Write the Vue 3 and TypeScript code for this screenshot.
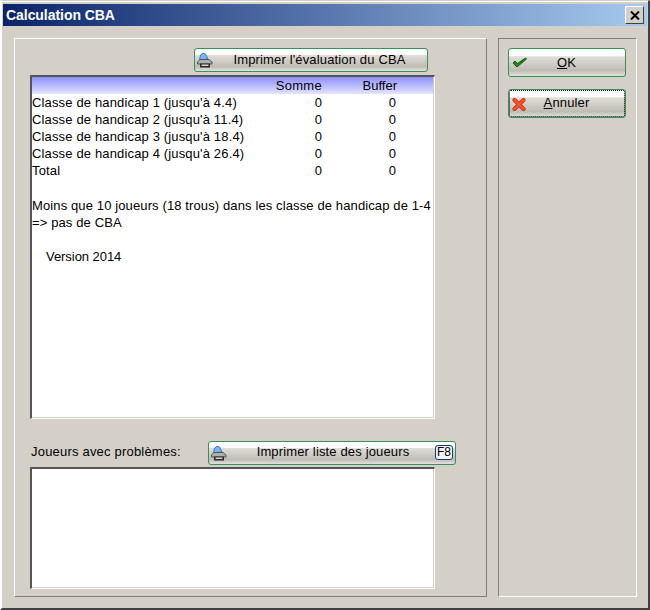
<script setup lang="ts">
const rows = [
  { label: "Classe de handicap 1 (jusqu'à 4.4)", sum: 0, buffer: 0 },
  { label: "Classe de handicap 2 (jusqu'à 11.4)", sum: 0, buffer: 0 },
  { label: "Classe de handicap 3 (jusqu'à 18.4)", sum: 0, buffer: 0 },
  { label: "Classe de handicap 4 (jusqu'à 26.4)", sum: 0, buffer: 0 },
  { label: "Total", sum: 0, buffer: 0 },
]
</script>

<template>
  <div class="window">
    <header class="titlebar">
      <span class="title">Calculation CBA</span>
      <button class="close" aria-label="Fermer">
        <svg width="10" height="9" viewBox="0 0 10 9"><path d="M1 0.5 L9 8.5 M9 0.5 L1 8.5" stroke="#000" stroke-width="2" fill="none" /></svg>
      </button>
    </header>
    <div class="content">
      <section class="group main">
        <div class="print-row first">
          <button class="btn print wide">
            <svg class="printer" width="16" height="16" viewBox="0 0 16 16">
              <path d="M2.5 8 L3.5 3 Q6 0.2 8.5 2 L11 7 Z" fill="#7db4f2" stroke="#2f6cc0" stroke-width="0.9" />
              <path d="M0.5 10 L3 7.5 H12 L15 10 V12 H0.5 Z" fill="#aeb2ae" stroke="#4a4a4a" stroke-width="0.9" />
              <path d="M3 11.5 H13 V15.5 H3 Z" fill="#262626" />
              <path d="M4.5 12.5 H11.5 V14 H4.5 Z" fill="#d8d8d8" />
            </svg>
            <span>Imprimer l'évaluation du CBA</span>
          </button>
        </div>
        <div class="panel report">
          <div class="thead">
            <span></span><span class="num head-cell">Somme</span><span class="num">Buffer</span>
          </div>
          <div v-for="r in rows" :key="r.label" class="row">
            <span class="row-label">{{ r.label }}</span>
            <span class="num zero">{{ r.sum }}</span>
            <span class="num zero">{{ r.buffer }}</span>
          </div>
          <p class="note">Moins que 10 joueurs (18 trous) dans les classe de handicap de 1-4<br />=&gt; pas de CBA</p>
          <p class="version">Version 2014</p>
        </div>
        <div class="print-row second">
          <span class="label">Joueurs avec problèmes:</span>
          <button class="btn print list">
            <svg class="printer" width="16" height="16" viewBox="0 0 16 16">
              <path d="M2.5 8 L3.5 3 Q6 0.2 8.5 2 L11 7 Z" fill="#7db4f2" stroke="#2f6cc0" stroke-width="0.9" />
              <path d="M0.5 10 L3 7.5 H12 L15 10 V12 H0.5 Z" fill="#aeb2ae" stroke="#4a4a4a" stroke-width="0.9" />
              <path d="M3 11.5 H13 V15.5 H3 Z" fill="#262626" />
              <path d="M4.5 12.5 H11.5 V14 H4.5 Z" fill="#d8d8d8" />
            </svg>
            <span>Imprimer liste des joueurs</span>
            <kbd class="key">F8</kbd>
          </button>
        </div>
        <div class="panel players"></div>
      </section>
      <aside class="group side">
        <button class="btn action ok">
          <svg class="glyph" width="16" height="12" viewBox="0 0 16 12"><path d="M1 6 L5 10 L14.5 2 L13.5 1 L5.5 6.5 L3 4 Z" fill="#1f8a1f" stroke="#0c5c0c" stroke-width="1" /></svg>
          <span><u>O</u>K</span>
        </button>
        <button class="btn action focused">
          <svg class="glyph" width="14" height="13" viewBox="0 0 14 13">
            <path d="M2.5 2 L11.5 11 M11.5 2 L2.5 11" stroke="#c42a10" stroke-width="4" stroke-linecap="round" fill="none" />
            <path d="M2.5 2 L11.5 11 M11.5 2 L2.5 11" stroke="#f8502a" stroke-width="2.6" stroke-linecap="round" fill="none" />
          </svg>
          <span><u>A</u>nnuler</span>
        </button>
      </aside>
    </div>
  </div>
</template>

<style>
html, body { margin: 0; padding: 0; background: #d4d0c8; }
</style>

<style scoped>
.window {
  box-sizing: border-box;
  width: 650px;
  height: 610px;
  padding: 3px 1px 1px 1px;
  background: #d4d0c8;
  border-top: 1px solid #d4d0c8;
  border-left: 2px solid #fff;
  border-right: 2px solid #404040;
  border-bottom: 2px solid #404040;
  font-family: "Liberation Sans", Arial, sans-serif;
  font-size: 13px;
  color: #000;
  box-shadow: inset 0 1px 0 #fff;
}
.titlebar {
  height: 22px;
  display: flex;
  align-items: center;
  justify-content: space-between;
  padding: 0 3px;
  background: linear-gradient(90deg, #0a246a, #a6caf0);
}
.title {
  color: #fff;
  font-weight: 700;
  font-size: 14px;
  letter-spacing: -0.05px;
}
.close {
  box-sizing: border-box;
  width: 19px;
  height: 18px;
  padding: 0;
  display: flex;
  align-items: center;
  justify-content: center;
  background: #d4d0c8;
  border: 1px solid;
  border-color: #fff #404040 #404040 #fff;
}
.content {
  display: flex;
  padding: 12px 10px 10px 11px;
  gap: 11px;
  height: 560px;
  box-sizing: border-box;
}
.group { box-sizing: border-box; }
.main {
  width: 473px;
  height: 559px;
  border: 1px solid;
  border-color: #fff #808080 #808080 #fff;
  padding: 9px 0 0 15px;
  display: flex;
  flex-direction: column;
}
.side {
  width: 139px;
  height: 559px;
  border: 1px solid;
  border-color: #808080 #fff #fff #808080;
  padding: 9px;
  display: flex;
  flex-direction: column;
  gap: 12px;
}
.btn {
  box-sizing: border-box;
  position: relative;
  height: 24px;
  padding: 0 0 2px;
  display: flex;
  align-items: center;
  justify-content: center;
  border: 1px solid #35905a;
  border-radius: 3px;
  font: inherit;
  letter-spacing: 0.15px;
  color: #000;
  background: linear-gradient(180deg, #fdfdfc 0 27%, #e0ded9 28%, #bfbcb4 80%, #e4e2dd 100%);
}
.print-row { display: flex; align-items: center; }
.print-row.first { padding-left: 164px; height: 27px; align-items: flex-start; }
.wide { width: 234px; }
.wide span { margin-left: 17px; }
.printer { position: absolute; left: 2px; top: 3px; }
.panel {
  box-sizing: border-box;
  width: 405px;
  background: #fff;
  border-style: solid;
  border-width: 2px 1px 1px 2px;
  border-color: #555 #fff #fff #555;
  box-shadow: inset -1px -1px 0 #d4d0c8;
}
.report { height: 344px; }
.thead, .row {
  display: grid;
  grid-template-columns: 233px 58px 74px;
}
.thead {
  height: 17px;
  line-height: 18px;
  margin-right: 1px;
  background: linear-gradient(180deg, #8f8fff, #e4e4ff);
}
.head-cell { letter-spacing: 0.3px; white-space: nowrap; padding-right: 1px; }
.row { height: 17px; line-height: 17px; }
.row-label { letter-spacing: 0.15px; white-space: nowrap; }
.num { text-align: right; }
.zero { padding-right: 1px; }
.note { margin: 18px 0 0 0; line-height: 17px; letter-spacing: 0.12px; white-space: nowrap; }
.version { margin: 17px 0 0 14px; line-height: 17px; letter-spacing: -0.05px; }
.print-row.second { margin-top: 21px; height: 25px; }
.label { width: 177px; padding-left: 1px; letter-spacing: 0.2px; padding-bottom: 2px; white-space: nowrap; }
.list { width: 248px; }
.list > span:first-of-type { margin-left: 2px; }
.key {
  position: absolute;
  right: 2px;
  top: 3px;
  box-sizing: border-box;
  width: 18px;
  height: 15px;
  font: inherit;
  font-size: 12px;
  line-height: 13px;
  letter-spacing: 0;
  text-align: center;
  border: 1px solid #123a6e;
  border-radius: 3px;
  background: #f2f4f8;
}
.players { height: 122px; margin-top: 2px; }
.action { width: 118px; height: 29px; }
.action span { margin-left: -1px; }
.ok { padding-bottom: 0; }
.glyph { position: absolute; left: 3px; top: 8px; }
.focused { outline: 1px dotted #000; outline-offset: -2px; }
</style>
